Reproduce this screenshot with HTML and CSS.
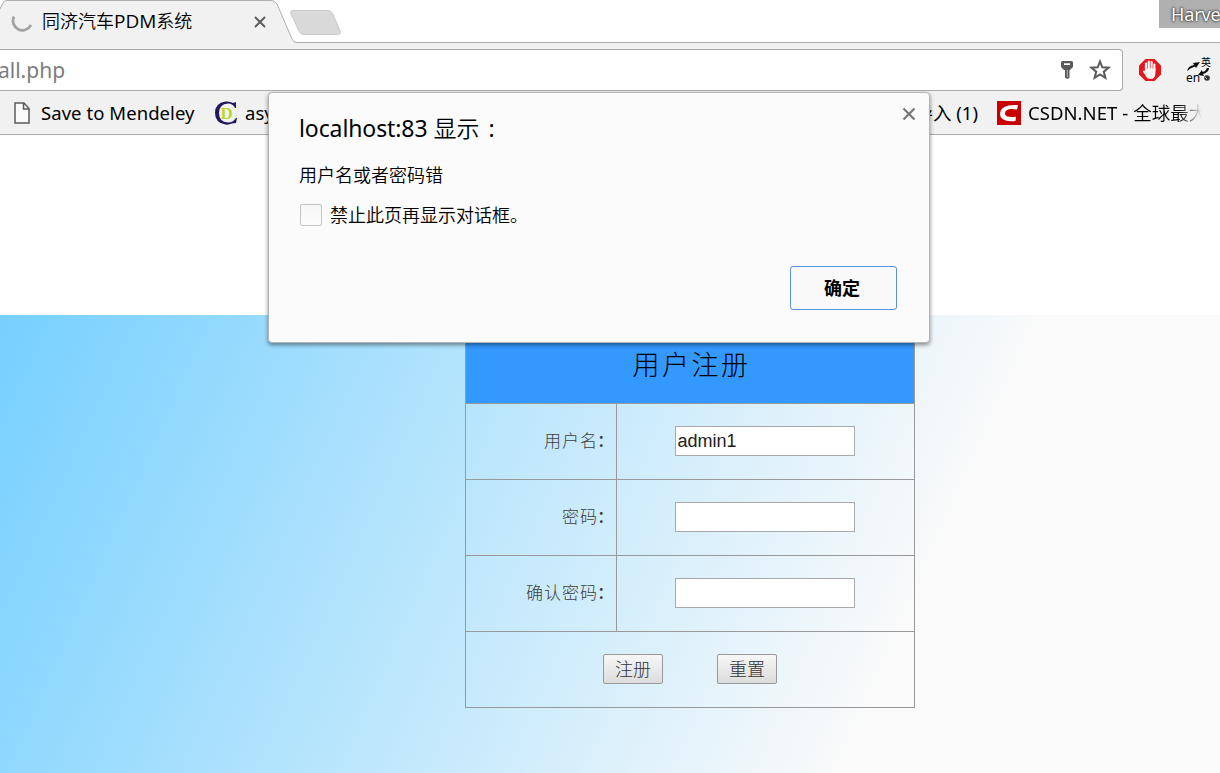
FILE: index.html
```html
<!DOCTYPE html>
<html lang="zh-CN">
<head>
<meta charset="utf-8">
<title>同济汽车PDM系统</title>
<link rel="stylesheet" href="styles.css">
</head>
<body>
<header class="tabstrip">
  <svg class="tab-shape" width="1220" height="43" viewBox="0 0 1220 43">
    <path d="M0 43V9L3 3Q4 .5 7 .5H271Q275 .5 277 4L292 39Q293.500 42.500 297 42.500H1220V43Z" fill="#f1f1f1"/>
    <path d="M0 9L3 3Q4 .5 7 .5H271Q275 .5 277 4L292 39Q293.500 42.500 297 42.500H1220" fill="none" stroke="#aeaeae"/>
    <path d="M293 10.500H328Q331 10.500 332.500 13L340 31Q341.500 34.500 337 34.500H304Q301 34.500 299.500 32L291 14Q289.500 10.500 293 10.500Z" fill="#d9d9d9" stroke="#c9c9c9"/>
  </svg>
  <svg class="spinner" width="22" height="22" viewBox="0 0 22 22"><path d="M4 5.500A9.300 9.300 0 1 0 21 14" fill="none" stroke="#a4a4a4" stroke-width="2.800"/></svg>
  <span class="tab-title">同济汽车<span class="latin">PDM</span>系统</span>
  <svg class="tab-close" width="12" height="12" viewBox="0 0 12 12"><path d="M1 1L11 11M11 1L1 11" stroke="#5a5a5a" stroke-width="1.800"/></svg>
  <span class="profile">Harve</span>
</header>
<div class="toolbar">
  <div class="omnibox">
    <span class="url">all.php</span>
    <svg class="key" width="14" height="20" viewBox="0 0 14 20"><path fill-rule="evenodd" d="M2.500 1H11.500Q13 1 13 2.500V7L10 10H9V17.500Q7.500 19 6 17.500V10H4L1 7V2.500Q1 1 2.500 1ZM4 3.200V5H10V3.200Z" fill="#5a5a5a"/><path d="M5 9.500V17.500Q7.500 20 9.500 17.500V9.500Z" fill="#5a5a5a"/><path d="M7.300 10V17" stroke="#bbb"/></svg>
    <svg class="star" width="22" height="22" viewBox="0 0 22 22"><path d="M11 2.500L13.300 8.300L19.600 8.700L14.800 12.700L16.400 18.900L11 15.500L5.600 18.900L7.200 12.700L2.400 8.700L8.700 8.300Z" fill="none" stroke="#5a5a5a" stroke-width="2"/></svg>
  </div>
  <svg class="adblock" width="24" height="24" viewBox="0 0 24 24">
    <path d="M7.500 1H16.500L23 7.500V16.500L16.500 23H7.500L1 16.500V7.500Z" fill="#e5171d"/>
    <path d="M8 13V5.500M10.800 12V3.500M13.600 12V4M16.300 13V6.500" stroke="#fff" stroke-width="2.200" stroke-linecap="round"/>
    <path d="M7 10H17.400V16Q17 21 12.500 21Q9 21 7.500 17.500L4.800 13.500Q5.500 11.600 7 13Z" fill="#f4f4f4"/>
    <path d="M9.400 6V11M12.200 5V11M15 6V11" stroke="#d66" stroke-width=".5"/>
  </svg>
  <div class="translate">
    <span class="tr-zh">英</span><span class="tr-en">en</span>
    <svg width="26" height="26" viewBox="0 0 26 26"><path d="M2 14Q3 9 9 8L8 6L15 5L11 11L10 9.500Q5 11 2 14Z" fill="#111"/><path d="M24 11Q24 15 18 17L19 19L13 18L17 13L17.500 15Q21 14 22 11Z" fill="#111"/><circle cx="22" cy="21" r="2.800" fill="#333"/><path d="M20 20L22 22" stroke="#aaa"/></svg>
  </div>
</div>
<nav class="bookmarks">
  <svg class="page-icon" width="16" height="22" viewBox="0 0 16 22"><path d="M1 1H10L15 6.500V21H1ZM9.500 1V7H15" fill="#fafafa" stroke="#5c5c5c" stroke-width="1.500"/></svg>
  <span class="bm mendeley">Save to Mendeley</span>
  <svg class="cd-icon" width="24" height="24" viewBox="0 0 24 24"><path d="M22 1V7H21Q19 2.500 14 2.500Q5 3 5 12Q5 21 14 21.500Q19 21.500 22 17H23L22 22L18 22.500Q15 24 11.500 23.500Q1 22 1 12Q1 2 11.500.5Q16 0 19 2Z" fill="#231760"/><text x="6.500" y="18" class="cd-letter">D</text></svg>
  <span class="bm">asy</span>
  <span class="bm import">导入 (1)</span>
  <svg class="csdn-icon" width="24" height="24" viewBox="0 0 24 24"><rect width="24" height="24" fill="#c90000"/><path d="M21 4L20 8.500Q8 6.500 8 12.500Q8 17 19 15.800L18.500 20Q3 21.500 3 13Q3.500 3 21 4Z" fill="#fff"/></svg>
  <span class="bm csdn">CSDN.NET - <span class="zh">全球最大</span></span>
</nav>
<main class="page">
  <section class="hero">
    <form class="register">
      <h1 class="title">用户注册</h1>
      <div class="row"><label class="label">用户名<i>：</i></label><div class="cell"><input class="field" type="text" value="admin1"></div></div>
      <div class="row"><label class="label">密码<i>：</i></label><div class="cell"><input class="field" type="password"></div></div>
      <div class="row"><label class="label">确认密码<i>：</i></label><div class="cell"><input class="field" type="password"></div></div>
      <div class="actions"><button class="btn" type="button">注册</button><button class="btn" type="button">重置</button></div>
    </form>
  </section>
</main>
<div class="dialog">
  <svg class="dialog-close" width="14" height="14" viewBox="0 0 14 14"><path d="M1.500 1.500L12.500 12.500M12.500 1.500L1.500 12.500" stroke="#777" stroke-width="2.200"/></svg>
  <h2 class="dialog-title"><span class="host">localhost:83</span> 显示<span class="colon">:</span></h2>
  <p class="message">用户名或者密码错</p>
  <label class="suppress"><span class="checkbox"></span>禁止此页再显示对话框。</label>
  <button class="ok" type="button">确定</button>
</div>
</body>
</html>
```
FILE: styles.css
```css
* { box-sizing: border-box; }
body {
  margin: 0;
  width: 1220px;
  height: 773px;
  overflow: hidden;
  position: relative;
  background: #fff;
  color: #000;
  font-family: "Noto Sans", "Noto Sans CJK SC", sans-serif;
  font-size: 18px;
}
svg { display: block; flex: none; }
.tabstrip { position: relative; display: flex; align-items: center; height: 43px; }
.tabstrip > * { position: relative; }
.tabstrip > .tab-shape { position: absolute; left: 0; top: 0; }
.spinner { margin-left: 10px; }
.tab-title { width: 212px; margin-left: 10px; padding-bottom: 2px; white-space: nowrap; font-family: "Open Sans", "Noto Sans CJK SC", sans-serif; font-size: 18px; line-height: 40px; font-weight: 350; }
.latin { font-size: 19px; font-weight: 400; letter-spacing: 0; }
.tab-close { margin-top: 1px; }
.profile {
  align-self: flex-start;
  width: 61px;
  height: 28px;
  margin-left: auto;
  padding-left: 12px;
  background: #b0b0b0;
  color: #fff;
  font-size: 18px;
  letter-spacing: -.1px;
  line-height: 29px;
  text-shadow: 0 0 2px #222, 0 0 3px #333;
}
.toolbar { display: flex; align-items: flex-start; height: 49px; padding-top: 6px; background: #f1f1f1; }
.omnibox { display: flex; align-items: center; width: 1123px; height: 42px; border: 1px solid #a9a9a9; border-left: 0; border-radius: 0 4px 4px 0; background: #fff; }
.url { flex: 1; margin-left: -2px; padding-bottom: 1px; color: #7c7c7c; font-size: 21px; }
.key { margin-right: 15px; }
.star { margin-right: 11px; }
.adblock { margin: 9px 0 0 15px; }
.translate { position: relative; width: 26px; height: 26px; margin: 8px 0 0 23px; }
.tr-zh, .tr-en { position: absolute; line-height: 1; }
.tr-zh { right: 0; top: 0; font-size: 10px; }
.tr-en { left: 1px; bottom: -1px; font-size: 12px; }
.bookmarks { display: flex; align-items: center; height: 43px; border-bottom: 1px solid #aaa; background: #f1f1f1; padding-left: 14px; white-space: nowrap; }
.bm { font-size: 18.500px; line-height: 42px; }
.zh { font-weight: 350; }
.mendeley { width: 155px; margin-left: 11px; letter-spacing: .06px; }
.cd-icon { margin: 0 7px 0 18px; }
.cd-letter { font: 700 17px "Liberation Serif", serif; fill: #b9d62d; }
.import { margin-left: auto; font-weight: 380; }
.csdn-icon { margin: 0 7px 0 19px; }
.csdn { width: 174px; margin-right: 18px; letter-spacing: .05px; -webkit-mask-image: linear-gradient(90deg, #000 87%, transparent); mask-image: linear-gradient(90deg, #000 87%, transparent); }
.page { height: 638px; padding-top: 180px; }
.hero { height: 458px; padding: 12px 0 0 465px; background: linear-gradient(114deg, #76d0ff 0, #fafafa 73.400%); }
.register { width: 450px; height: 381px; border: 1px solid #999; font-family: "Liberation Sans", "Noto Sans CJK SC", sans-serif; }
.title { height: 75px; margin: 0; padding-left: 3px; background: #39f; text-align: center; font-size: 27px; font-weight: 300; line-height: 77px; letter-spacing: 2.500px; }
.row { display: flex; height: 76px; border-top: 1px solid #999; }
.label { width: 151px; border-right: 1px solid #999; color: #3c3c3c; text-align: right; font-weight: 300; font-size: 17px; letter-spacing: 1px; line-height: 75px; }
.label i { display: inline-block; width: 18px; margin-left: -1px; margin-right: 1px; font-style: normal; font-weight: 500; }
.cell { flex: 1; display: flex; align-items: center; justify-content: center; padding: 0 2px 2px 0; }
.field { width: 180px; height: 30px; padding: 2px 2px 1px; border: 1px solid #a9a9a9; background: #fff; color: #222; font: 18px "Liberation Sans", sans-serif; outline: 0; }
.actions { display: flex; align-items: center; justify-content: center; gap: 54px; height: 76px; padding-bottom: 2px; border-top: 1px solid #999; }
.btn { width: 60px; height: 30px; padding: 0 0 2px; border: 1px solid #999; border-radius: 2px; background: linear-gradient(#f7f7f7, #dcdcdc); color: #333; font: 300 18px/26px "Noto Sans CJK SC", sans-serif; }
.dialog { position: absolute; left: 268px; top: 92px; width: 662px; height: 251px; padding: 19px 32px 32px 30px; border: 1px solid #b5b5b5; border-radius: 4px; background: #fbfbfb; box-shadow: 0 2px 4px rgba(0, 0, 0, .45); display: flex; flex-direction: column; align-items: flex-start; font-weight: 350; }
.dialog-close { position: absolute; right: 13px; top: 14px; }
.dialog-title { margin: 0; font-size: 23px; font-weight: 350; line-height: 32px; }
.host { font-weight: 400; letter-spacing: -.1px; }
.colon { margin-left: 9px; font-weight: 400; }
.message { margin: 17px 0 0; line-height: 28px; }
.suppress { display: flex; align-items: center; gap: 8px; margin-top: 12px; line-height: 28px; }
.checkbox { width: 22px; height: 22px; margin-left: 1px; border: 1px solid #c4c4c4; border-radius: 2px; background: linear-gradient(#f6f6f6, #fcfcfc); }
.ok { align-self: flex-end; width: 107px; height: 44px; margin-top: auto; padding: 0 3px 2px 0; border: 1px solid #5a8fe6; border-radius: 3px; background: #f9f9f9; font: 700 18px "Noto Sans CJK SC", sans-serif; color: #000; }
```
